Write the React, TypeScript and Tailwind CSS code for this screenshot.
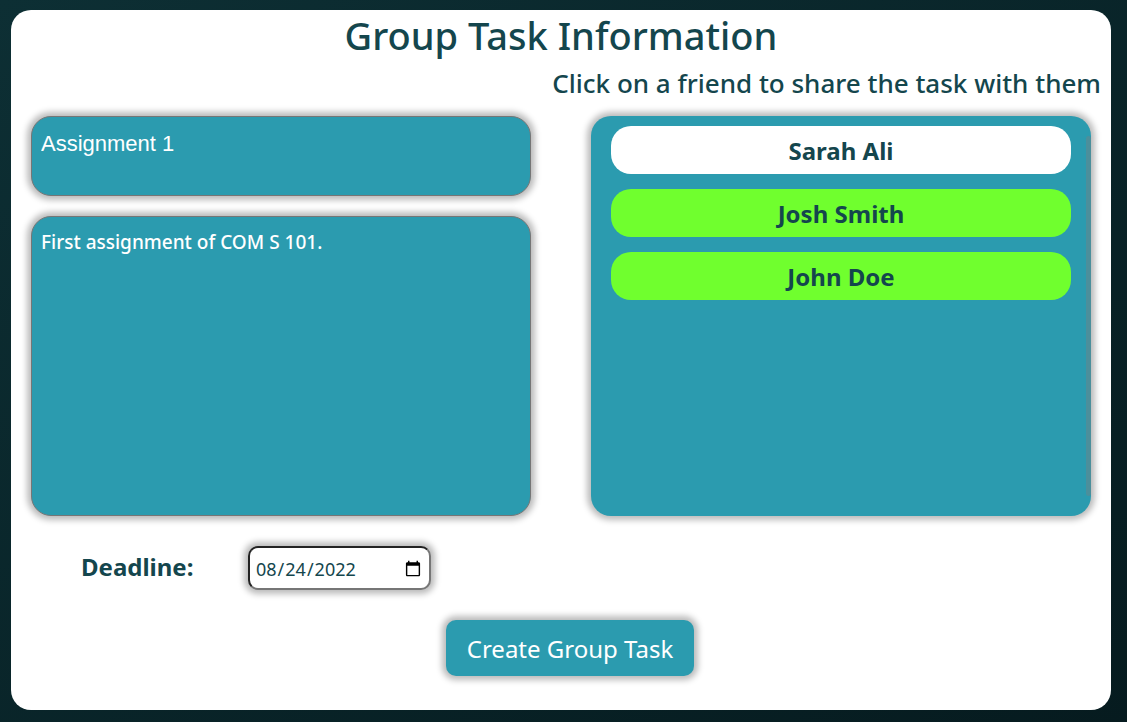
import { useState } from "react";

type Friend = { name: string; shared: boolean };

const initialFriends: Friend[] = [
  { name: "Sarah Ali", shared: false },
  { name: "Josh Smith", shared: true },
  { name: "John Doe", shared: true },
];

const shadow = "shadow-[0_0_6px_4px_rgba(0,0,0,0.27)]";

export default function App() {
  const [friends, setFriends] = useState(initialFriends);

  const toggle = (name: string) =>
    setFriends((list) => list.map((f) => (f.name === name ? { ...f, shared: !f.shared } : f)));

  return (
    <div className="min-h-screen bg-linear-to-br from-[#0d2f34] to-[#061b1f] pt-[10px] pr-4 pb-3 pl-[11px] font-['Noto_Sans',sans-serif] text-[#14464d]">
      <form className="flex min-h-[700px] flex-col rounded-[20px] bg-white" onSubmit={(e) => e.preventDefault()}>
        <h1 className="text-center text-[38px] leading-[50px] font-medium">Group Task Information</h1>
        <p className="pr-[10px] text-right text-[26px] leading-[46px] font-medium">
          Click on a friend to share the task with them
        </p>
        <div className="mt-[10px] grid grid-cols-2 gap-[60px] px-5">
          <div className="flex flex-col gap-5">
            <input
              aria-label="Task title"
              defaultValue="Assignment 1"
              className={`h-20 w-full rounded-[20px] border border-[#767676] bg-[#2b9baf] px-[9px] pb-6 font-['Liberation_Sans',sans-serif] text-[22px] text-white outline-none ${shadow}`}
            />
            <textarea
              aria-label="Task description"
              defaultValue="First assignment of COM S 101."
              className={`h-[300px] w-full resize-none rounded-[20px] border border-[#767676] bg-[#2b9baf] px-[9px] py-[10px] text-[19px] leading-[30px] font-medium text-white outline-none ${shadow}`}
            />
          </div>
          <div className={`flex h-[400px] rounded-[20px] bg-[#2b9baf] ${shadow}`}>
            <ul className="flex grow flex-col gap-[15px] py-[10px] pr-[15px] pl-5">
              {friends.map((f) => (
                <li key={f.name}>
                  <button
                    type="button"
                    aria-pressed={f.shared}
                    onClick={() => toggle(f.name)}
                    className={`block h-12 w-full rounded-[20px] pt-[2px] text-[24px] leading-8 font-bold ${f.shared ? "bg-[#70ff2e]" : "bg-white"}`}
                  >
                    {f.name}
                  </button>
                </li>
              ))}
            </ul>
            <div className="my-5 w-[5px] rounded-full bg-[#4c8f9b]" />
          </div>
        </div>
        <div className="mt-[30px] flex items-center pl-[70px]">
          <label htmlFor="deadline" className="w-[167px] pb-[2px] text-[24px] leading-8 font-bold">
            Deadline:
          </label>
          <input
            id="deadline"
            type="date"
            defaultValue="2022-08-24"
            className={`h-11 w-[183px] rounded-[10px] border-2 border-t-[#222] border-r-[#767676] border-b-[#767676] border-l-[#222] bg-white px-[5px] pt-[2px] text-[18px] ${shadow}`}
          />
        </div>
        <button
          type="submit"
          className={`mt-[30px] ml-[18px] h-14 w-[248px] self-center rounded-[10px] bg-[#2b9baf] pt-[2px] text-[24px] text-white ${shadow}`}
        >
          Create Group Task
        </button>
      </form>
    </div>
  );
}
